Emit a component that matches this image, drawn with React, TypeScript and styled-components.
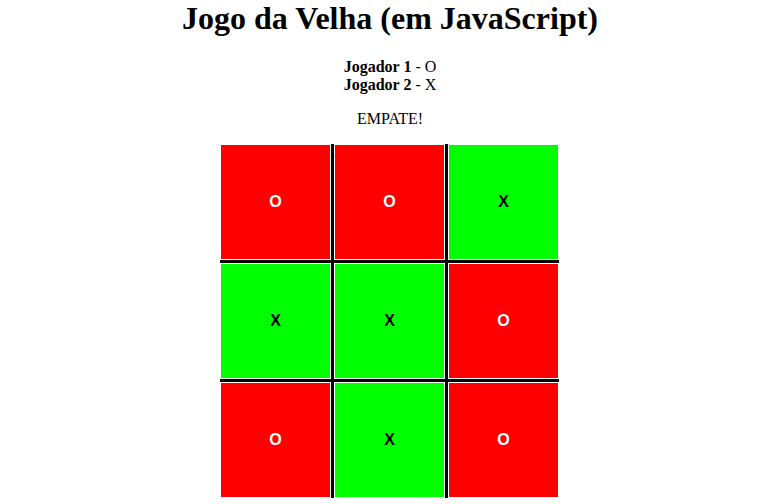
import React from 'react';
import styled, { createGlobalStyle } from 'styled-components';

type Mark = 'O' | 'X';

const GlobalStyle = createGlobalStyle`
    body {
        margin: 0;
        background: #fff;
        font-family: "Liberation Serif", "Times New Roman", serif;
        color: #000;
    }
`;

const Page = styled.div`
    text-align: center;
`;

const Title = styled.h1`
    font-size: 32px;
    font-weight: bold;
    margin: 0 0 21.44px;
`;

const Info = styled.p`
    font-size: 16px;
    margin: 16px 0;
`;

const Board = styled.div`
    display: grid;
    grid-template-columns: repeat(3, auto);
    justify-content: start;
    width: 340px;
    margin: 16px auto 0;
`;

interface ICellProps {
    $mark: Mark;
    $lastCol: boolean;
    $lastRow: boolean;
}
const Cell = styled.div<ICellProps>`
    display: flex;
    align-items: center;
    justify-content: center;
    width: 109px;
    height: 114px;
    padding: 1px;
    background: ${(p) => (p.$mark === 'O' ? '#ff0000' : '#00ff00')};
    background-clip: content-box;
    border-right: ${(p) => (p.$lastCol ? 'none' : '3px solid #000')};
    border-bottom: ${(p) => (p.$lastRow ? 'none' : '3px solid #000')};
    color: ${(p) => (p.$mark === 'O' ? '#fff' : '#000')};
    font-family: "Liberation Sans", Arial, sans-serif;
    font-size: 16px;
    font-weight: bold;
`;

const board: Mark[][] = [
    ['O', 'O', 'X'],
    ['X', 'X', 'O'],
    ['O', 'X', 'O'],
];

export default function App() {
    return (
        <Page>
            <GlobalStyle />
            <Title>Jogo da Velha (em JavaScript)</Title>
            <Info>
                <b>Jogador 1</b> - O
                <br />
                <b>Jogador 2</b> - X
            </Info>
            <Info>EMPATE!</Info>
            <Board>
                {board.map((row, r) =>
                    row.map((mark, c) => (
                        <Cell key={`${r}-${c}`} $mark={mark} $lastCol={c === 2} $lastRow={r === 2}>
                            {mark}
                        </Cell>
                    ))
                )}
            </Board>
        </Page>
    );
}
